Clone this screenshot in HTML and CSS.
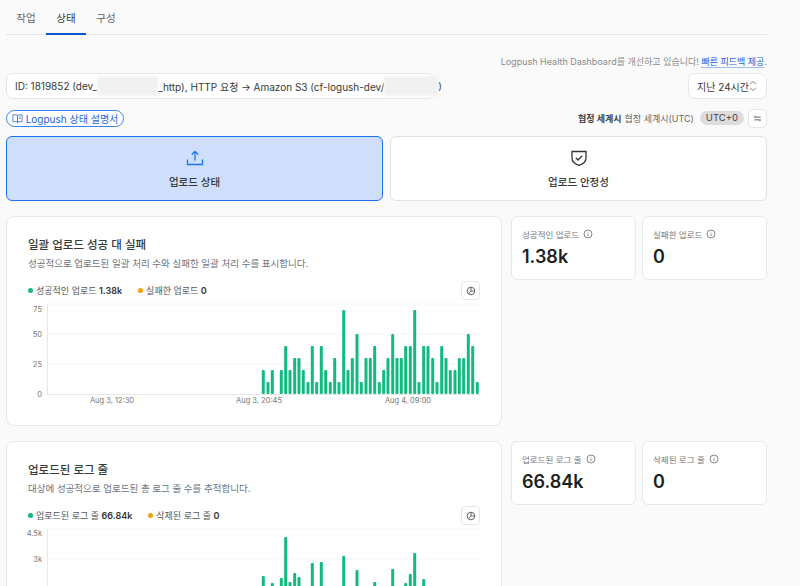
FILE: index.html
```html
<!DOCTYPE html>
<html lang="ko">
    <head>
        <title>Logpush</title>
        <meta charset="utf-8"/>
        <link rel="stylesheet" href="styles.css">
    </head>
    <body class="body">
        <nav class="tabs">
            <a class="tab">작업</a>
            <a class="tab tab_on">상태</a>
            <a class="tab">구성</a>
        </nav>

        <p class="feedback">Logpush Health Dashboard를 개선하고 있습니다! <a class="feedback_link">빠른 피드백 제공</a>.</p>

        <div class="select_row">
            <div class="select select_job">
                <span class="job_text">ID: 1819852 (dev_<span class="mask mask_a"></span>_http), HTTP 요청 → Amazon S3 (cf-logush-dev/<span class="mask mask_b"></span>)</span>
                <svg class="updown" viewBox="0 0 8 12"><path d="M1 4.2 4 1.4 7 4.2M1 7.8 4 10.6 7 7.8"/></svg>
            </div>
            <div class="select select_time">
                <span>지난 24시간</span>
                <svg class="updown" viewBox="0 0 8 12"><path d="M1 4.2 4 1.4 7 4.2M1 7.8 4 10.6 7 7.8"/></svg>
            </div>
        </div>

        <div class="tool_row">
            <a class="doc_pill">
                <svg class="doc_icon" viewBox="0 0 12 12"><path d="M1 2h3.6c.8 0 1.4.5 1.4 1.2V10.500c0-.6-.6-1-1.400-1H1zM11 2H7.400C6.600 2 6 2.500 6 3.200V10.500c0-.6.6-1 1.400-1H11zM7.800 4.200h1.700M7.800 6h1.700"/></svg>
                Logpush 상태 설명서
            </a>
            <div class="utc">
                <b class="utc_name">협정 세계시</b>
                <span>협정 세계시(UTC)</span>
                <span class="utc_badge">UTC+0</span>
                <button class="small_btn">
                    <svg class="swap_icon" viewBox="0 0 10 10"><path d="M1.500 3.500h7M1.500 3.500 3 2M8.500 6.500h-7M8.500 6.500 7 8"/></svg>
                </button>
            </div>
        </div>

        <div class="big_cards">
            <div class="big_card big_card_on">
                <svg class="big_icon big_icon_blue" viewBox="0 0 18 18"><path d="M9 11.500V2.500M5.800 5.500 9 2.300l3.200 3.200M1.500 10.500v5h15v-5"/></svg>
                <span>업로드 상태</span>
            </div>
            <div class="big_card">
                <svg class="big_icon" viewBox="0 0 18 18"><path d="M2 2.500h14v6.500c0 3.800-3 6-7 7.300C5 15 2 12.800 2 9zM5.800 8.800 8 11l4.200-4.200"/></svg>
                <span>업로드 안정성</span>
            </div>
        </div>

        <section class="metric">
            <div class="panel">
                <h2 class="panel_title">일괄 업로드 성공 대 실패</h2>
                <p class="panel_sub">성공적으로 업로드된 일괄 처리 수와 실패한 일괄 처리 수를 표시합니다.</p>
                <div class="legend_row">
                    <div class="legend">
                        <span class="legend_item"><i class="dot dot_green"></i>성공적인 업로드 <b>1.38k</b></span>
                        <span class="legend_item"><i class="dot dot_orange"></i>실패한 업로드 <b>0</b></span>
                    </div>
                    <button class="small_btn">
                        <svg class="clock_icon" viewBox="0 0 10 10"><circle cx="5" cy="5" r="3.800"/><path d="M5 1.200V5L2.300 7.700M5 5h3.800"/></svg>
                    </button>
                </div>
                <svg class="chart" viewBox="22 300 458 110">
                    <line class="grid" x1="47" y1="304" x2="480" y2="304"/>
                    <line class="grid" x1="47" y1="334" x2="480" y2="334"/>
                    <line class="grid" x1="47" y1="364" x2="480" y2="364"/>
                    <line class="axis" x1="47.500" y1="304" x2="47.500" y2="394"/>
                    <line class="axis" x1="47" y1="394.500" x2="480" y2="394.500"/>
                    <text class="tick_y" x="42" y="311.500">75</text>
                    <text class="tick_y" x="42" y="337">50</text>
                    <text class="tick_y" x="42" y="367">25</text>
                    <text class="tick_y" x="42" y="397">0</text>
                    <text class="tick_x" x="112" y="402.500">Aug 3, 12:30</text>
                    <text class="tick_x" x="259" y="402.500">Aug 3, 20:45</text>
                    <text class="tick_x" x="408" y="402.500">Aug 4, 09:00</text>
                    <rect class="bar" x="261.800" y="370" height="24"/>
                    <rect class="bar" x="266.500" y="382" height="12"/>
                    <rect class="bar" x="270.800" y="370" height="24"/>
                    <rect class="bar" x="279.800" y="370" height="24"/>
                    <rect class="bar" x="284.200" y="346" height="48"/>
                    <rect class="bar" x="288.500" y="370" height="24"/>
                    <rect class="bar" x="293.200" y="358" height="36"/>
                    <rect class="bar" x="297.500" y="358" height="36"/>
                    <rect class="bar" x="301.800" y="370" height="24"/>
                    <rect class="bar" x="306.500" y="382" height="12"/>
                    <rect class="bar" x="310.800" y="346" height="48"/>
                    <rect class="bar" x="315.200" y="382" height="12"/>
                    <rect class="bar" x="319.800" y="346" height="48"/>
                    <rect class="bar" x="324.200" y="370" height="24"/>
                    <rect class="bar" x="328.800" y="382" height="12"/>
                    <rect class="bar" x="333.200" y="358" height="36"/>
                    <rect class="bar" x="337.500" y="382" height="12"/>
                    <rect class="bar" x="342.200" y="310" height="84"/>
                    <rect class="bar" x="346.500" y="370" height="24"/>
                    <rect class="bar" x="350.800" y="358" height="36"/>
                    <rect class="bar" x="355.500" y="334" height="60"/>
                    <rect class="bar" x="359.800" y="382" height="12"/>
                    <rect class="bar" x="364.500" y="358" height="36"/>
                    <rect class="bar" x="368.800" y="358" height="36"/>
                    <rect class="bar" x="373.200" y="346" height="48"/>
                    <rect class="bar" x="377.800" y="382" height="12"/>
                    <rect class="bar" x="382.200" y="370" height="24"/>
                    <rect class="bar" x="386.500" y="358" height="36"/>
                    <rect class="bar" x="391.200" y="334" height="60"/>
                    <rect class="bar" x="395.500" y="358" height="36"/>
                    <rect class="bar" x="399.800" y="358" height="36"/>
                    <rect class="bar" x="404.200" y="346" height="48"/>
                    <rect class="bar" x="408.800" y="346" height="48"/>
                    <rect class="bar" x="413.200" y="310" height="84"/>
                    <rect class="bar" x="417.500" y="382" height="12"/>
                    <rect class="bar" x="422.200" y="346" height="48"/>
                    <rect class="bar" x="426.500" y="346" height="48"/>
                    <rect class="bar" x="431.200" y="358" height="36"/>
                    <rect class="bar" x="435.500" y="382" height="12"/>
                    <rect class="bar" x="440.200" y="346" height="48"/>
                    <rect class="bar" x="444.500" y="358" height="36"/>
                    <rect class="bar" x="448.800" y="370" height="24"/>
                    <rect class="bar" x="453.500" y="370" height="24"/>
                    <rect class="bar" x="457.800" y="358" height="36"/>
                    <rect class="bar" x="462.200" y="358" height="36"/>
                    <rect class="bar" x="466.800" y="334" height="60"/>
                    <rect class="bar" x="471.200" y="346" height="48"/>
                    <rect class="bar" x="475.800" y="382" height="12"/>
                </svg>
            </div>
            <div class="stats">
                <div class="stat">
                    <div class="stat_label">성공적인 업로드 <svg class="info_icon" viewBox="0 0 10 10"><circle cx="5" cy="5" r="4"/><path d="M5 4.500v2.500M5 2.800v.6"/></svg></div>
                    <div class="stat_value">1.38k</div>
                </div>
                <div class="stat">
                    <div class="stat_label">실패한 업로드 <svg class="info_icon" viewBox="0 0 10 10"><circle cx="5" cy="5" r="4"/><path d="M5 4.500v2.500M5 2.800v.6"/></svg></div>
                    <div class="stat_value">0</div>
                </div>
            </div>
        </section>

        <section class="metric">
            <div class="panel">
                <h2 class="panel_title">업로드된 로그 줄</h2>
                <p class="panel_sub">대상에 성공적으로 업로드된 총 로그 줄 수를 추적합니다.</p>
                <div class="legend_row">
                    <div class="legend">
                        <span class="legend_item"><i class="dot dot_green"></i>업로드된 로그 줄 <b>66.84k</b></span>
                        <span class="legend_item"><i class="dot dot_orange"></i>삭제된 로그 줄 <b>0</b></span>
                    </div>
                    <button class="small_btn">
                        <svg class="clock_icon" viewBox="0 0 10 10"><circle cx="5" cy="5" r="3.800"/><path d="M5 1.200V5L2.300 7.700M5 5h3.800"/></svg>
                    </button>
                </div>
                <svg class="chart" viewBox="22 300 458 110">
                    <line class="grid" x1="47" y1="304" x2="480" y2="304"/>
                    <line class="grid" x1="47" y1="334" x2="480" y2="334"/>
                    <line class="grid" x1="47" y1="364" x2="480" y2="364"/>
                    <line class="axis" x1="47.500" y1="304" x2="47.500" y2="394"/>
                    <line class="axis" x1="47" y1="394.500" x2="480" y2="394.500"/>
                    <text class="tick_y" x="42" y="311">4.5k</text>
                    <text class="tick_y" x="42" y="337">3k</text>
                    <text class="tick_y" x="42" y="367">1.5k</text>
                    <text class="tick_y" x="42" y="397">0</text>
                    <rect class="bar" x="261.800" y="351" height="43"/>
                    <rect class="bar" x="266.500" y="376" height="18"/>
                    <rect class="bar" x="270.800" y="358" height="36"/>
                    <rect class="bar" x="279.800" y="353" height="41"/>
                    <rect class="bar" x="284.200" y="312" height="82"/>
                    <rect class="bar" x="288.500" y="357" height="37"/>
                    <rect class="bar" x="293.200" y="348" height="46"/>
                    <rect class="bar" x="297.500" y="352" height="42"/>
                    <rect class="bar" x="301.800" y="372" height="22"/>
                    <rect class="bar" x="306.500" y="380" height="14"/>
                    <rect class="bar" x="310.800" y="338" height="56"/>
                    <rect class="bar" x="315.200" y="380" height="14"/>
                    <rect class="bar" x="319.800" y="337" height="57"/>
                    <rect class="bar" x="324.200" y="368" height="26"/>
                    <rect class="bar" x="328.800" y="380" height="14"/>
                    <rect class="bar" x="333.200" y="366" height="28"/>
                    <rect class="bar" x="337.500" y="380" height="14"/>
                    <rect class="bar" x="342.200" y="331" height="63"/>
                    <rect class="bar" x="346.500" y="370" height="24"/>
                    <rect class="bar" x="350.800" y="366" height="28"/>
                    <rect class="bar" x="355.500" y="345" height="49"/>
                    <rect class="bar" x="359.800" y="380" height="14"/>
                    <rect class="bar" x="364.500" y="366" height="28"/>
                    <rect class="bar" x="368.800" y="366" height="28"/>
                    <rect class="bar" x="373.200" y="357" height="37"/>
                    <rect class="bar" x="377.800" y="380" height="14"/>
                    <rect class="bar" x="382.200" y="370" height="24"/>
                    <rect class="bar" x="386.500" y="366" height="28"/>
                    <rect class="bar" x="391.200" y="344" height="50"/>
                    <rect class="bar" x="395.500" y="366" height="28"/>
                    <rect class="bar" x="399.800" y="366" height="28"/>
                    <rect class="bar" x="404.200" y="358" height="36"/>
                    <rect class="bar" x="408.800" y="349" height="45"/>
                    <rect class="bar" x="413.200" y="328" height="66"/>
                    <rect class="bar" x="417.500" y="380" height="14"/>
                    <rect class="bar" x="422.200" y="354" height="40"/>
                    <rect class="bar" x="426.500" y="366" height="28"/>
                    <rect class="bar" x="431.200" y="366" height="28"/>
                    <rect class="bar" x="435.500" y="380" height="14"/>
                    <rect class="bar" x="440.200" y="366" height="28"/>
                    <rect class="bar" x="444.500" y="366" height="28"/>
                    <rect class="bar" x="448.800" y="372" height="22"/>
                    <rect class="bar" x="453.500" y="372" height="22"/>
                    <rect class="bar" x="457.800" y="366" height="28"/>
                    <rect class="bar" x="462.200" y="366" height="28"/>
                    <rect class="bar" x="466.800" y="362" height="32"/>
                    <rect class="bar" x="471.200" y="366" height="28"/>
                    <rect class="bar" x="475.800" y="380" height="14"/>
                </svg>
            </div>
            <div class="stats">
                <div class="stat">
                    <div class="stat_label">업로드된 로그 줄 <svg class="info_icon" viewBox="0 0 10 10"><circle cx="5" cy="5" r="4"/><path d="M5 4.500v2.500M5 2.800v.6"/></svg></div>
                    <div class="stat_value">66.84k</div>
                </div>
                <div class="stat">
                    <div class="stat_label">삭제된 로그 줄 <svg class="info_icon" viewBox="0 0 10 10"><circle cx="5" cy="5" r="4"/><path d="M5 4.500v2.500M5 2.800v.6"/></svg></div>
                    <div class="stat_value">0</div>
                </div>
            </div>
        </section>
    </body>
</html>
```
FILE: styles.css
```css
html{
    background-color:#fafafa;
}
.body{
    margin:0px;
    padding:0px 33px 0px 6px;
    height:586px;
    overflow:hidden;
    font-family:Inter,"Noto Sans CJK KR",sans-serif;
    font-size:10px;
    color:#36393a;
}
svg{
    display:block;
    fill:none;
}

/* tabs */
.tabs{
    display:flex;
    height:34px;
    border-bottom:1px solid #e5e5e5;
}
.tab{
    box-sizing:border-box;
    width:40px;
    height:35px;
    padding-top:10px;
    text-align:center;
    font-size:10.500px;
    color:#666;
}
.tab_on{
    color:#36393a;
    border-bottom:2px solid #0b55c9;
}

/* feedback line and selects */
.feedback{
    margin:20px 0px 5px;
    height:13px;
    line-height:13px;
    text-align:right;
    font-size:9px;
    color:#8a8a8a;
}
.feedback_link{
    color:#2563d9;
    border-bottom:1px solid #9dbcf0;
}
.select_row{
    display:flex;
    justify-content:space-between;
}
.select{
    box-sizing:border-box;
    height:26px;
    display:flex;
    align-items:center;
    justify-content:space-between;
    background-color:white;
    border:1px solid #e6e6e6;
    border-radius:7px;
    font-size:10px;
    color:#36393a;
}
.select_job{
    width:429px;
    padding:0px 10px 0px 8px;
}
.select_time{
    width:79px;
    padding:0px 9px 0px 8px;
}
.job_text{
    display:flex;
    align-items:center;
    white-space:pre;
}
.mask{
    display:block;
    height:20px;
    background-color:#f1f1f1;
    filter:blur(1px);
}
.mask_a{
    width:61px;
}
.mask_b{
    width:54px;
}
.updown{
    width:8px;
    height:12px;
}
.updown path{
    stroke:#777;
    stroke-width:.9;
}

/* doc pill, utc */
.tool_row{
    display:flex;
    justify-content:space-between;
    align-items:center;
    margin-top:9px;
    height:20px;
}
.doc_pill{
    box-sizing:border-box;
    width:118px;
    height:17px;
    display:flex;
    align-items:center;
    justify-content:center;
    gap:3px;
    background-color:white;
    border:1px solid #3b82f0;
    border-radius:9px;
    font-size:10px;
    color:#2563d9;
}
.doc_icon{
    width:11px;
    height:11px;
}
.doc_icon path{
    stroke:#3b6fd0;
    stroke-width:.9;
}
.utc{
    display:flex;
    align-items:center;
    gap:3px;
    font-size:9px;
    color:#666;
}
.utc_name{
    font-weight:600;
    color:#444;
}
.utc_badge{
    margin-left:3px;
    padding:0px 6px;
    height:14px;
    line-height:14px;
    background-color:#dcdcdc;
    border-radius:7px;
    font-size:9.500px;
    color:#444;
}
.small_btn{
    box-sizing:border-box;
    width:19px;
    height:19px;
    margin-left:1px;
    padding:0px;
    display:flex;
    align-items:center;
    justify-content:center;
    background-color:white;
    border:1px solid #e6e6e6;
    border-radius:4px;
}
.swap_icon{
    width:9px;
    height:9px;
}
.swap_icon path{
    stroke:#444;
    stroke-width:.9;
}
.clock_icon{
    width:10px;
    height:10px;
}
.clock_icon circle,.clock_icon path{
    stroke:#555;
    stroke-width:.9;
}

/* upload cards */
.big_cards{
    display:flex;
    gap:7px;
    margin-top:8px;
}
.big_card{
    box-sizing:border-box;
    flex:1;
    height:65px;
    display:flex;
    flex-direction:column;
    align-items:center;
    padding-top:12px;
    gap:7px;
    background-color:white;
    border:1px solid #e2e2e2;
    border-radius:6px;
    font-size:10.500px;
    font-weight:500;
    color:#36393a;
}
.big_card_on{
    background-color:#cfdffb;
    border:1px solid #1a73f0;
}
.big_icon{
    width:18px;
    height:18px;
}
.big_icon path{
    stroke:#333;
    stroke-width:1.300;
}
.big_icon_blue path{
    stroke:#1a73f0;
}

/* metric sections */
.metric{
    display:flex;
    align-items:flex-start;
    gap:9px;
    margin-top:15px;
}
.panel{
    box-sizing:border-box;
    width:496px;
    height:210px;
    padding:21px 21px 0px 21px;
    background-color:white;
    border:1px solid #e8e8e8;
    border-radius:8px;
}
.panel_title{
    margin:0px;
    height:14px;
    line-height:14px;
    font-size:11.500px;
    font-weight:500;
    color:#36393a;
}
.panel_sub{
    margin:6px 0px 0px;
    height:12px;
    line-height:12px;
    font-size:9.500px;
    color:#6b7280;
}
.legend_row{
    display:flex;
    justify-content:space-between;
    align-items:center;
    margin-top:11px;
    height:19px;
}
.legend{
    display:flex;
    gap:16px;
    font-size:9px;
    color:#555;
}
.legend_item b{
    font-weight:600;
    color:#333;
}
.dot{
    display:inline-block;
    width:5px;
    height:5px;
    margin-right:3px;
    border-radius:50%;
    vertical-align:1px;
}
.dot_green{
    background-color:#10b981;
}
.dot_orange{
    background-color:#f59e0b;
}
.chart{
    width:458px;
    height:110px;
    margin-left:-6px;
}
.grid{
    stroke:#f6f6f6;
}
.axis{
    stroke:#e8e8e8;
}
.tick_y,.tick_x{
    font-size:7.500px;
    fill:#777;
}
.tick_y{
    text-anchor:end;
}
.tick_x{
    text-anchor:middle;
}
.bar{
    width:3px;
    rx:1px;
    fill:#12ba7f;
}

/* stat cards */
.stats{
    display:grid;
    grid-template-columns:125px 125px;
    gap:6px;
}
.stat{
    box-sizing:border-box;
    height:64px;
    padding:10px 10px 0px;
    background-color:white;
    border:1px solid #e8e8e8;
    border-radius:6px;
}
.stat_label{
    display:flex;
    align-items:center;
    gap:4px;
    height:13px;
    font-size:8.500px;
    color:#777;
}
.info_icon{
    width:10px;
    height:10px;
}
.info_icon circle,.info_icon path{
    stroke:#555;
    stroke-width:.7;
}
.stat_value{
    margin-top:6px;
    font-size:18px;
    font-weight:600;
    line-height:22px;
    color:#1d1f20;
}
```
